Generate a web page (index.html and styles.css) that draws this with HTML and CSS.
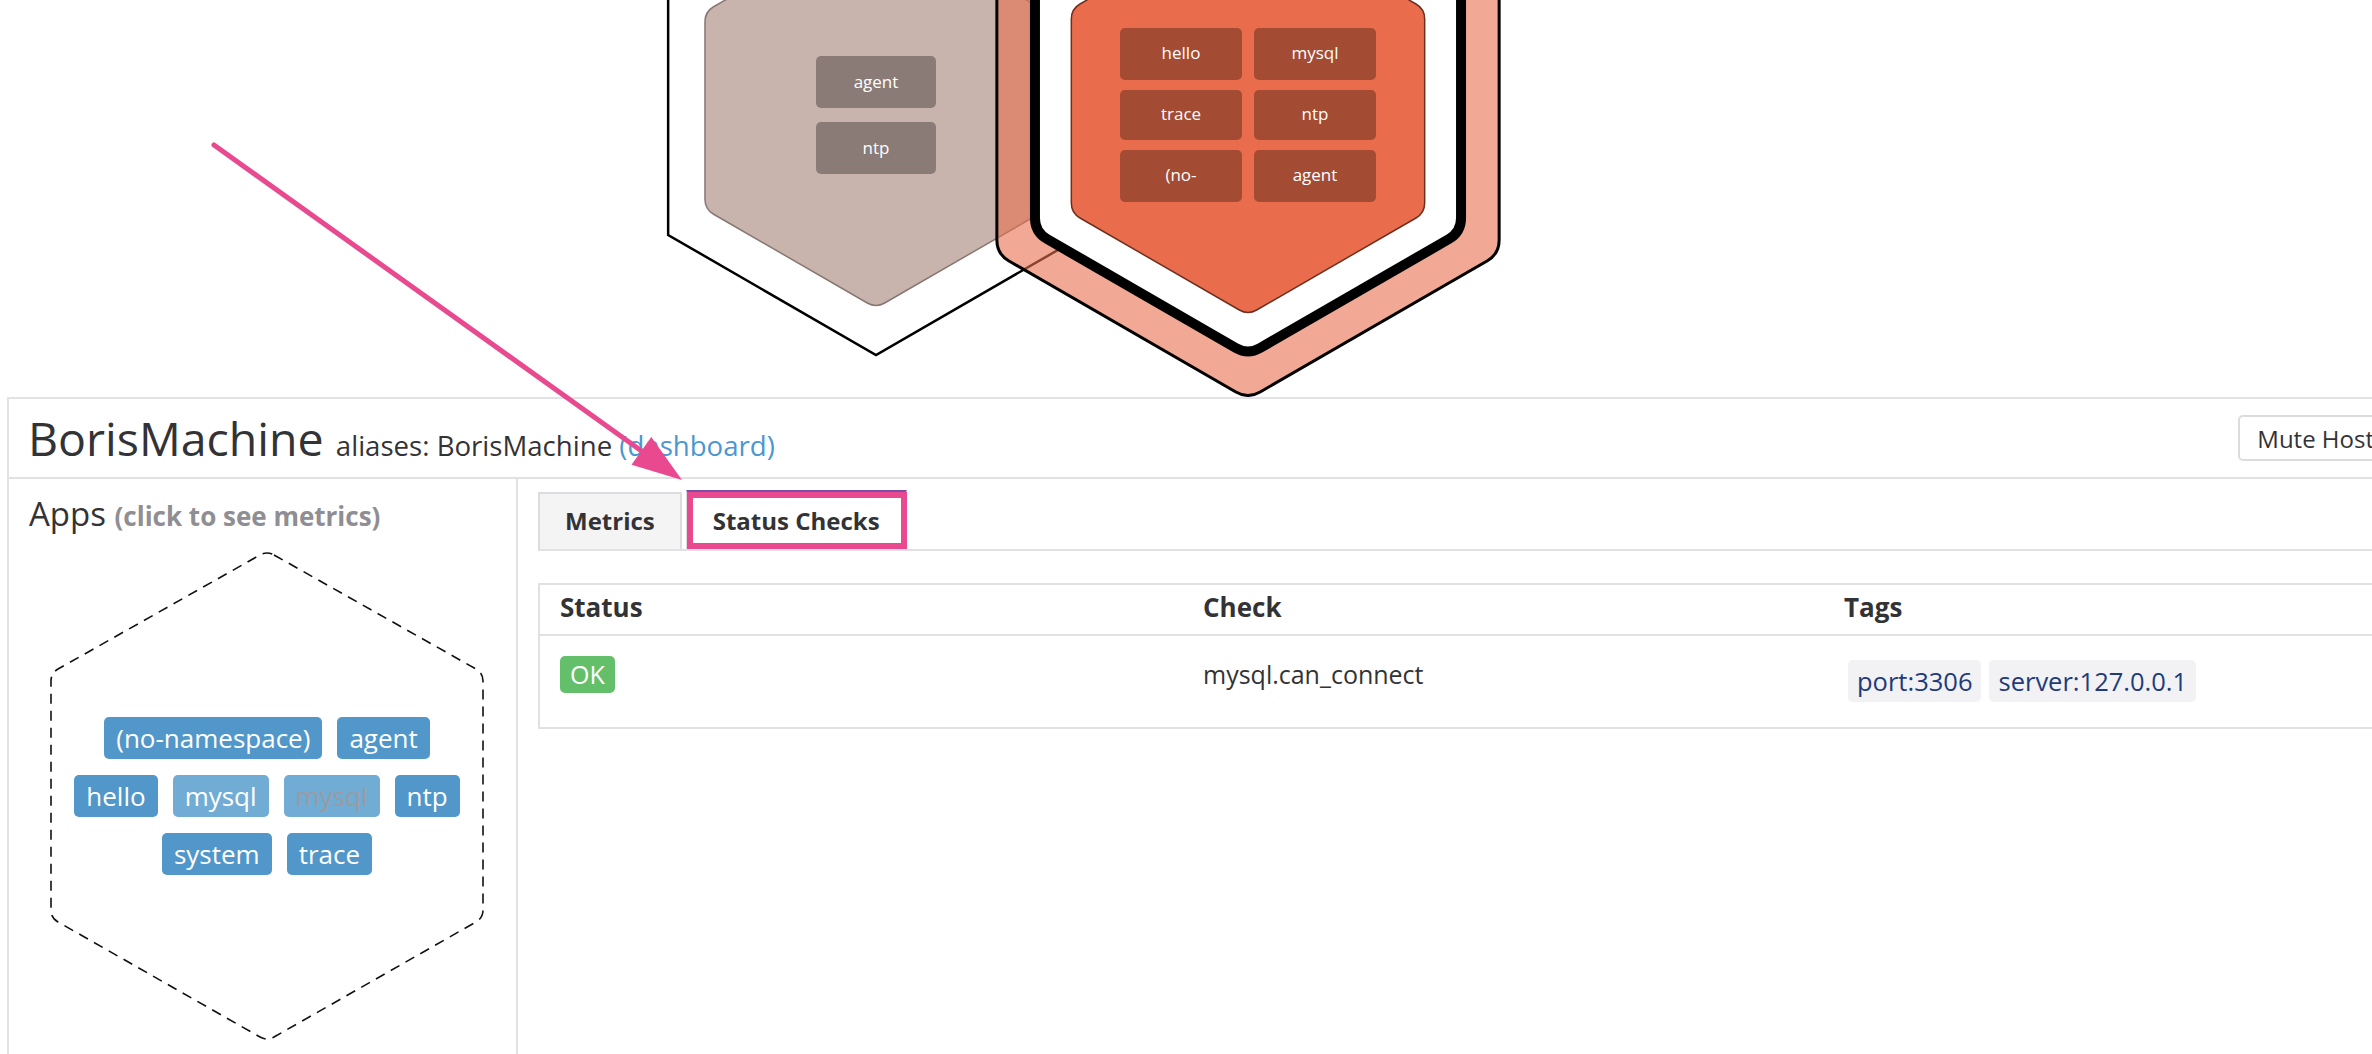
FILE: index.html
```html
<!DOCTYPE html>
<html>
<head>
<meta charset="utf-8">
<title>BorisMachine</title>
<link rel="stylesheet" href="styles.css">
</head>
<body>
<div class="map">
  <svg width="2372" height="397" viewBox="0 0 2372 397">
    <polygon points="876,-125 1083.85,-5 1083.85,235 876,355 668.15,235 668.15,-5" fill="#fff" stroke="#000" stroke-width="2.5"/>
    <path transform="translate(876 110.5)" d="M 8.66,-192.5 L 162.38,-103.75 Q 171.04,-98.75 171.04,-88.75 L 171.04,88.75 Q 171.04,98.75 162.38,103.75 L 8.66,192.5 Q 0,197.5 -8.66,192.5 L -162.38,103.75 Q -171.04,98.75 -171.04,88.75 L -171.04,-88.75 Q -171.04,-98.75 -162.38,-103.75 L -8.66,-192.5 Q 0,-197.5 8.66,-192.5 Z" fill="#c8b4ad" stroke="#877773" stroke-width="1.5"/>
    <rect x="816" y="56" width="120" height="52" rx="5" fill="#8b7b77"/>
    <rect x="816" y="122" width="120" height="52" rx="5" fill="#8b7b77"/>
    <text class="lbl" x="876" y="88">agent</text>
    <text class="lbl" x="876" y="154">ntp</text>

    <path transform="translate(1248 109)" d="M 12.12,-283 L 239.02,-152 Q 251.14,-145 251.14,-131 L 251.14,131 Q 251.14,145 239.02,152 L 12.12,283 Q 0,290 -12.12,283 L -239.02,152 Q -251.14,145 -251.14,131 L -251.14,-131 Q -251.14,-145 -239.02,-152 L -12.12,-283 Q 0,-290 12.12,-283 Z" fill="#e8704f" fill-opacity="0.6" stroke="#000" stroke-width="3"/>
    <path transform="translate(1248 109)" d="M 12.12,-239 L 200.92,-130 Q 213.04,-123 213.04,-109 L 213.04,109 Q 213.04,123 200.92,130 L 12.12,239 Q 0,246 -12.12,239 L -200.92,130 Q -213.04,123 -213.04,109 L -213.04,-109 Q -213.04,-123 -200.92,-130 L -12.12,-239 Q 0,-246 12.12,-239 Z" fill="#fff" stroke="#000" stroke-width="10"/>
    <path transform="translate(1248 111)" d="M 8.66,-199 L 168.01,-107 Q 176.67,-102 176.67,-92 L 176.67,92 Q 176.67,102 168.01,107 L 8.66,199 Q 0,204 -8.66,199 L -168.01,107 Q -176.67,102 -176.67,92 L -176.67,-92 Q -176.67,-102 -168.01,-107 L -8.66,-199 Q 0,-204 8.66,-199 Z" fill="#e96d4c" stroke="#6e2f1f" stroke-width="1.5"/>

    <rect x="1120" y="28" width="122" height="52" rx="5" fill="#a34b33"/>
    <rect x="1254" y="28" width="122" height="52" rx="5" fill="#a34b33"/>
    <rect x="1120" y="90" width="122" height="50" rx="5" fill="#a34b33"/>
    <rect x="1254" y="90" width="122" height="50" rx="5" fill="#a34b33"/>
    <rect x="1120" y="150" width="122" height="52" rx="5" fill="#a34b33"/>
    <rect x="1254" y="150" width="122" height="52" rx="5" fill="#a34b33"/>
    <text class="lbl" x="1181" y="59">hello</text>
    <text class="lbl" x="1315" y="59">mysql</text>
    <text class="lbl" x="1181" y="120">trace</text>
    <text class="lbl" x="1315" y="120">ntp</text>
    <text class="lbl" x="1181" y="181">(no-</text>
    <text class="lbl" x="1315" y="181">agent</text>
  </svg>
</div>

<div class="card">
  <div class="card-head">
    <h1>BorisMachine <small>aliases: BorisMachine <a href="#">(dashboard)</a></small></h1>
    <button class="mute">Mute Host</button>
  </div>
  <div class="card-body">
    <aside class="apps">
      <h2>Apps <span>(click to see metrics)</span></h2>
      <div class="hexbox">
        <svg class="hexline" width="436" height="494" viewBox="0 0 436 494">
          <path d="M 224.97,5.94 L 427.03,120.06 Q 434,124 434,132 L 434,361 Q 434,369 427.03,372.94 L 224.97,488.06 Q 218,492 211.03,488.06 L 8.97,372.94 Q 2,369 2,361 L 2,132 Q 2,124 8.97,120.06 L 211.03,5.94 Q 218,2 224.97,5.94 Z" fill="none" stroke="#111" stroke-width="1.6" stroke-dasharray="10 7"/>
        </svg>
        <div class="chip-row">
          <span class="chip">(no-namespace)</span>
          <span class="chip">agent</span>
        </div>
        <div class="chip-row">
          <span class="chip">hello</span>
          <span class="chip light">mysql</span>
          <span class="chip light faded">mysql</span>
          <span class="chip">ntp</span>
        </div>
        <div class="chip-row">
          <span class="chip">system</span>
          <span class="chip">trace</span>
        </div>
      </div>
    </aside>
    <main class="checks">
      <div class="tabs">
        <div class="tab">Metrics</div>
        <div class="tab active">Status Checks</div>
      </div>
      <table class="check-table">
        <colgroup>
          <col class="c1">
          <col class="c2">
          <col>
        </colgroup>
        <thead>
          <tr><th>Status</th><th>Check</th><th>Tags</th></tr>
        </thead>
        <tbody>
          <tr>
            <td><span class="ok">OK</span></td>
            <td>mysql.can_connect</td>
            <td><span class="tag">port:3306</span><span class="tag">server:127.0.0.1</span></td>
          </tr>
        </tbody>
      </table>
    </main>
  </div>
</div>

<svg class="annot" width="2372" height="1054" viewBox="0 0 2372 1054">
  <line x1="214" y1="145" x2="643" y2="452" stroke="#e94a8f" stroke-width="5" stroke-linecap="round"/>
  <polygon points="682,480 651.3,437.1 631.5,464.7" fill="#e94a8f"/>
</svg>
<div class="hl"></div>
</body>
</html>
```

FILE: styles.css
```css
html, body {
  margin: 0;
  padding: 0;
  overflow: hidden;
  background: #fff;
}

body {
  width: 2372px;
  height: 1054px;
  position: relative;
  font-family: "Open Sans", "Noto Sans", "DejaVu Sans", sans-serif;
  color: #333336;
}

.map {
  height: 397px;
}

.map svg {
  display: block;
}

.lbl {
  font-family: "Open Sans", "Noto Sans", sans-serif;
  font-size: 17px;
  fill: #fff;
  text-anchor: middle;
}

.card {
  margin-left: 7px;
  width: 2410px;
  height: 700px;
  box-sizing: border-box;
  border: 2px solid #e3e3e7;
  background: #fff;
}

.card-head {
  display: flex;
  align-items: center;
  height: 78px;
  padding: 0 22px 0 19px;
  border-bottom: 2px solid #e0e0e5;
}

.card-head h1 {
  flex: 1;
  margin: 0;
  font-size: 46.5px;
  font-weight: 400;
  line-height: 1;
  white-space: nowrap;
  color: #333336;
}

.card-head h1 small {
  font-size: 27.6px;
}

.card-head h1 a {
  color: #4b97cf;
  text-decoration: none;
}

.mute {
  height: 46px;
  padding: 0 17px;
  font-family: "Open Sans", "Noto Sans", sans-serif;
  font-size: 24px;
  color: #333336;
  background: #fff;
  border: 2px solid #dcdce0;
  border-radius: 5px;
}

.card-body {
  display: flex;
  height: 620px;
}

.apps {
  width: 509px;
  flex: none;
  box-sizing: border-box;
  padding: 15px 0 0 20px;
  border-right: 2px solid #e0e0e5;
}

.apps h2 {
  margin: 0;
  font-size: 33px;
  font-weight: 400;
  line-height: 40px;
  white-space: nowrap;
}

.apps h2 span {
  font-size: 26px;
  font-weight: 700;
  color: #8e8e93;
}

.hexbox {
  position: relative;
  width: 436px;
  height: 494px;
  margin: 13px 0 0 20px;
  display: flex;
  flex-direction: column;
  justify-content: center;
  align-items: center;
  gap: 16px;
}

.hexline {
  position: absolute;
  left: 0;
  top: 0;
}

.chip-row {
  position: relative;
  display: flex;
  gap: 15px;
}

.chip {
  height: 42px;
  line-height: 42px;
  padding: 0 12px;
  border-radius: 5px;
  background: #5297c9;
  color: #fff;
  font-size: 26px;
  white-space: nowrap;
}

.chip.light {
  background: #71acd5;
}

.chip.faded {
  color: #9b9ba0;
}

.checks {
  flex: 1;
  padding: 11px 20px 0 20px;
}

.tabs {
  display: flex;
  align-items: flex-end;
  gap: 4px;
  border-bottom: 2px solid #e0e0e5;
}

.tab {
  font-size: 24px;
  font-weight: 700;
  line-height: 34px;
  padding: 10px 25px 11px;
  border: 2px solid #dcdce0;
  border-bottom: none;
  background: #f4f4f5;
  white-space: nowrap;
}

.tab.active {
  background: #fff;
  border-top: 3px solid #7b4fa6;
  padding-top: 11px;
}

.check-table {
  margin-top: 32px;
  width: 100%;
  table-layout: fixed;
  border-collapse: separate;
  border-spacing: 0;
  border: 2px solid #e0e0e5;
}

.check-table col.c1 {
  width: 643px;
}

.check-table col.c2 {
  width: 641px;
}

.check-table th {
  text-align: left;
  font-size: 26px;
  font-weight: 700;
  line-height: 36px;
  padding: 4px 20px 9px;
  border-bottom: 2px solid #e0e0e5;
}

.check-table td {
  font-size: 25px;
  line-height: 36px;
  padding: 20px 20px 25px;
  vertical-align: top;
  white-space: nowrap;
}

.ok {
  display: inline-block;
  vertical-align: top;
  height: 37px;
  line-height: 37px;
  padding: 0 10px;
  border-radius: 5px;
  background: #64bf6a;
  color: #fff;
}

.tag {
  display: inline-block;
  vertical-align: top;
  height: 42px;
  line-height: 42px;
  margin: 4px 8px 0 4px;
  padding: 0 9px;
  border-radius: 5px;
  background: #f2f2f4;
  color: #1e3b7b;
  font-size: 25.5px;
}

.tag + .tag {
  margin-left: 0;
}

.annot {
  position: absolute;
  left: 0;
  top: 0;
  pointer-events: none;
}

.hl {
  position: absolute;
  left: 687px;
  top: 492px;
  width: 220px;
  height: 57px;
  box-sizing: border-box;
  border: 6px solid #e94a8f;
  pointer-events: none;
}
```
